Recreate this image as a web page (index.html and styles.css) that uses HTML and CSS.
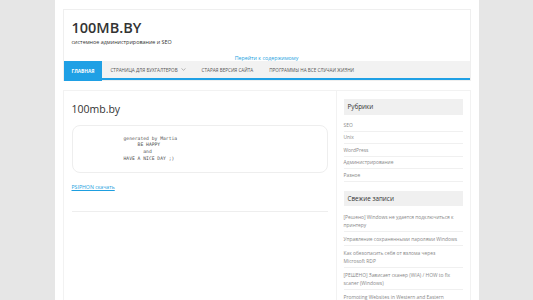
FILE: index.html
```html
<!DOCTYPE html>
<html lang="ru">
<head>
    <meta charset="UTF-8">
    <title>100MB.BY | системное администрирование и SEO</title>
    <link rel="stylesheet" href="styles.css">
</head>
<body>
    <div class="page">
        <header class="site-header">
            <div class="branding">
                <h1 class="site-title">100MB.BY</h1>
                <p class="site-desc">системное администрирование и SEO</p>
            </div>
            <a class="skip-link" href="#content">Перейти к содержимому</a>
            <nav class="main-nav">
                <a class="nav-item active" href="#">Главная</a>
                <a class="nav-item" href="#">Страница для бухгалтеров
                    <svg class="caret" width="5" height="3" viewBox="0 0 5 3"><path d="M0.5 0.5 L2.5 2.3 L4.5 0.5" fill="none" stroke="#999" stroke-width="0.7"/></svg>
                </a>
                <a class="nav-item" href="#">Старая версия сайта</a>
                <a class="nav-item" href="#">Программы на все случаи жизни</a>
            </nav>
        </header>

        <div class="content-wrap" id="content">
            <main class="main-col">
                <h2 class="entry-title">100mb.by</h2>
                <pre class="banner">generated by Martia
     BE HAPPY
       and
HAVE A NICE DAY ;)</pre>
                <p class="entry-link"><a href="#">PSIPHON скачать</a></p>
                <hr class="entry-sep">
            </main>

            <aside class="sidebar">
                <section class="widget">
                    <h3 class="widget-title">Рубрики</h3>
                    <ul class="widget-list">
                        <li><a href="#">SEO</a></li>
                        <li><a href="#">Unix</a></li>
                        <li><a href="#">WordPress</a></li>
                        <li><a href="#">Администрирование</a></li>
                        <li><a href="#">Разное</a></li>
                    </ul>
                </section>
                <section class="widget">
                    <h3 class="widget-title">Свежие записи</h3>
                    <ul class="widget-list posts">
                        <li><a href="#">[Решено] Windows не удается подключиться к принтеру</a></li>
                        <li><a href="#">Управление сохраненными паролями Windows</a></li>
                        <li><a href="#">Как обезопасить себя от взлома через <span class="nowrap">Microsoft RDP</span></a></li>
                        <li><a href="#">[РЕШЕНО] Зависает сканер (WIA) / HOW to fix scaner (Windows)</a></li>
                        <li><a href="#">Promoting Websites in Western and Eastern Markets</a></li>
                    </ul>
                </section>
            </aside>
        </div>
    </div>
</body>
</html>
```

FILE: styles.css
```css
body {
    margin: 0;
    background-color: #e6e6e6;
    font-family: "Open Sans", "Noto Sans", sans-serif;
    color: #333;
}

a {
    text-decoration: none;
}

.page {
    width: 408px;
    height: 291px;
    overflow: hidden;
    margin: 0 auto;
    padding: 9px 8px 0;
    background: #fff;
}

/* header */
.site-header {
    border: 1px solid #efefef;
    display: flex;
    flex-direction: column;
}

.branding {
    padding: 7.5px 8px 0;
}

.site-title {
    margin: 0;
    font-size: 14.5px;
    line-height: 20px;
    font-weight: 600;
    color: #333;
}

.site-desc {
    margin: 0.5px 0 0;
    font-size: 5.4px;
    line-height: 8px;
    color: #333;
}

.skip-link {
    align-self: center;
    margin-top: 9px;
    font-size: 5.3px;
    line-height: 6px;
    color: #1e9fe0;
}

.main-nav {
    display: flex;
    background: #f2f2f2;
    border-bottom: 2.5px solid #1fa0e5;
}

.nav-item {
    padding: 0 8px;
    height: 17px;
    display: flex;
    align-items: center;
    gap: 3px;
    font-size: 4.6px;
    text-transform: uppercase;
    color: #555;
}

.nav-item.active {
    background: #1fa0e5;
    color: #fff;
    font-size: 4.8px;
    font-weight: 700;
    margin-bottom: -2.5px;
    height: 19.5px;
}

.caret {
    display: block;
}

/* content */
.content-wrap {
    display: flex;
    margin-top: 8.5px;
    border: 1px solid #f2f2f2;
    border-bottom: none;
    min-height: 220px;
}

.main-col {
    width: 256px;
    padding: 8px 8px 0;
    border-right: 1px solid #f2f2f2;
}

.entry-title {
    margin: 2px 0 0;
    font-size: 10.5px;
    line-height: 16px;
    font-weight: 400;
    color: #333;
}

.banner {
    margin: 8px 0 0;
    padding: 10px 0 10px 51px;
    border: 1px solid #eee;
    border-radius: 8px;
    font-family: "DejaVu Sans Mono", monospace;
    font-size: 4.7px;
    line-height: 6.7px;
    color: #555;
}

.entry-link {
    margin: 10px 0 0;
    font-size: 5.2px;
    line-height: 8px;
}

.entry-link a {
    color: #1e9fe0;
    text-decoration: underline;
}

.entry-sep {
    margin: 20px 0 0;
    border: none;
    border-top: 1px solid #eee;
}

/* sidebar */
.sidebar {
    flex: 1;
    padding: 8.5px 7px 0;
}

.widget + .widget {
    margin-top: 9px;
}

.widget-title {
    margin: 0;
    padding: 0 4px;
    height: 15.5px;
    display: flex;
    align-items: center;
    background: #f0f0f0;
    font-size: 6.3px;
    font-weight: 400;
    color: #333;
}

.widget-list {
    list-style: none;
    margin: 4.5px 0 0;
    padding: 0;
}

.widget-list li {
    padding: 2.5px 0;
    border-bottom: 1px solid #f0f0f0;
    font-size: 4.9px;
    line-height: 6.5px;
}

.widget-list.posts {
    margin-top: 4px;
}

.widget-list.posts li {
    padding-right: 4px;
    line-height: 8px;
}

.widget-list a {
    color: #888;
}

.nowrap {
    white-space: nowrap;
}
```
